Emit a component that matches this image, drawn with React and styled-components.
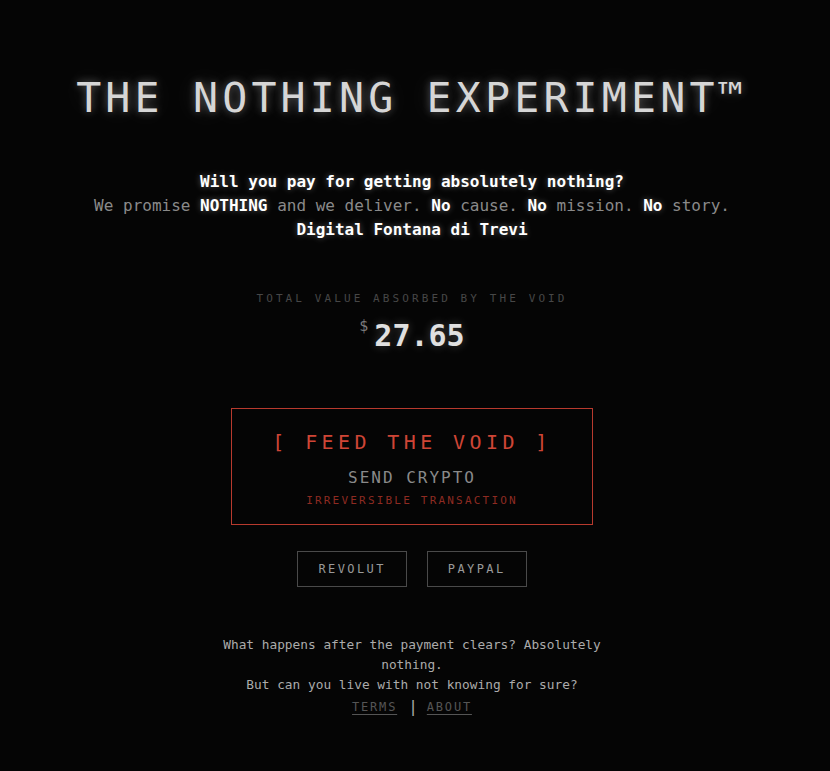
import React from 'react';
import styled, { createGlobalStyle } from 'styled-components';

const GlobalStyle = createGlobalStyle`
  html, body {
    margin: 0;
    padding: 0;
    background: #050505;
  }
  body {
    font-family: 'DejaVu Sans Mono', 'Liberation Mono', monospace;
    color: #aaa;
  }
`;

const Page = styled.main`
  min-height: 771px;
  box-sizing: border-box;
  padding: 73px 6px 40px 0;
  display: flex;
  flex-direction: column;
  align-items: center;
  text-align: center;
`;

const Title = styled.h1`
  margin: 0;
  font-size: 41.6px;
  line-height: 1.2;
  font-weight: normal;
  letter-spacing: 0.1em;
  color: #d6d6d6;
  text-shadow: 0 0 8px rgba(255, 255, 255, 0.35), 0 0 28px rgba(255, 255, 255, 0.15);
`;

const Intro = styled.div`
  margin-top: 47px;
  font-size: 16px;
  line-height: 24px;
  color: #8a8a8a;
`;

const Strong = styled.span`
  font-weight: bold;
  color: #fff;
  text-shadow: 0 0 6px rgba(255, 255, 255, 0.35);
`;

const Line = styled.div``;

const Label = styled.div`
  margin-top: 49px;
  font-size: 11px;
  line-height: 16.5px;
  letter-spacing: 3.1px;
  color: #474747;
`;

const Amount = styled.div`
  margin-top: 11px;
  display: flex;
  align-items: flex-start;
  font-size: 30px;
  line-height: 36px;
  font-weight: bold;
  color: #e0e0e0;
  text-shadow: 0 0 10px rgba(255, 255, 255, 0.25);
`;

const Currency = styled.span`
  font-size: 15px;
  line-height: 15px;
  font-weight: normal;
  color: #7a7a7a;
  margin-top: 1px;
  margin-right: 6px;
  text-shadow: none;
`;

const FeedButton = styled.button`
  margin-top: 54px;
  display: flex;
  flex-direction: column;
  align-items: center;
  padding: 21px 40px 17px;
  background: transparent;
  border: 1px solid #b83a2e;
  font-family: inherit;
  cursor: pointer;
`;

const FeedTitle = styled.span`
  font-size: 20px;
  line-height: 24px;
  letter-spacing: 4.4px;
  color: #cf4536;
`;

const FeedSub = styled.span`
  margin-top: 13.5px;
  font-size: 16px;
  line-height: 19px;
  letter-spacing: 2px;
  color: #8a8a8a;
`;

const FeedWarn = styled.span`
  margin-top: 7px;
  font-size: 11px;
  line-height: 13px;
  letter-spacing: 2.2px;
  color: #8e2b22;
`;

const PayRow = styled.div`
  margin-top: 26px;
  display: flex;
  gap: 20px;
`;

const PayButton = styled.button`
  padding: 10px 20px;
  background: transparent;
  border: 1px solid #4a4a4a;
  font-family: inherit;
  font-size: 12px;
  line-height: 14px;
  letter-spacing: 2.4px;
  color: #999;
  cursor: pointer;
`;

const Footer = styled.footer`
  margin-top: 48px;
  max-width: 400px;
  font-size: 12.8px;
  line-height: 20px;
  color: #ababab;
`;

const Links = styled.div`
  margin-top: 2px;
  display: flex;
  justify-content: center;
  align-items: center;
`;

const FootLink = styled.a`
  font-size: 12px;
  line-height: 20px;
  letter-spacing: 1.8px;
  color: #555;
  text-decoration: underline;
  text-underline-offset: 3px;
`;

const Sep = styled.span`
  margin: 0 9px 0 11px;
  font-size: 16px;
  line-height: 20px;
  color: #aaa;
`;

export default function App() {
  return (
    <>
      <GlobalStyle />
      <Page>
        <Title>THE NOTHING EXPERIMENT™</Title>
        <Intro>
          <Line>
            <Strong>Will you pay for getting absolutely nothing?</Strong>
          </Line>
          <Line>
            We promise <Strong>NOTHING</Strong> and we deliver. <Strong>No</Strong> cause.{' '}
            <Strong>No</Strong> mission. <Strong>No</Strong> story.
          </Line>
          <Line>
            <Strong>Digital Fontana di Trevi</Strong>
          </Line>
        </Intro>
        <Label>TOTAL VALUE ABSORBED BY THE VOID</Label>
        <Amount>
          <Currency>$</Currency>
          27.65
        </Amount>
        <FeedButton>
          <FeedTitle>[ FEED THE VOID ]</FeedTitle>
          <FeedSub>SEND CRYPTO</FeedSub>
          <FeedWarn>IRREVERSIBLE TRANSACTION</FeedWarn>
        </FeedButton>
        <PayRow>
          <PayButton>REVOLUT</PayButton>
          <PayButton>PAYPAL</PayButton>
        </PayRow>
        <Footer>
          <Line>What happens after the payment clears? Absolutely nothing.</Line>
          <Line>But can you live with not knowing for sure?</Line>
          <Links>
            <FootLink href="#terms">TERMS</FootLink>
            <Sep>|</Sep>
            <FootLink href="#about">ABOUT</FootLink>
          </Links>
        </Footer>
      </Page>
    </>
  );
}
